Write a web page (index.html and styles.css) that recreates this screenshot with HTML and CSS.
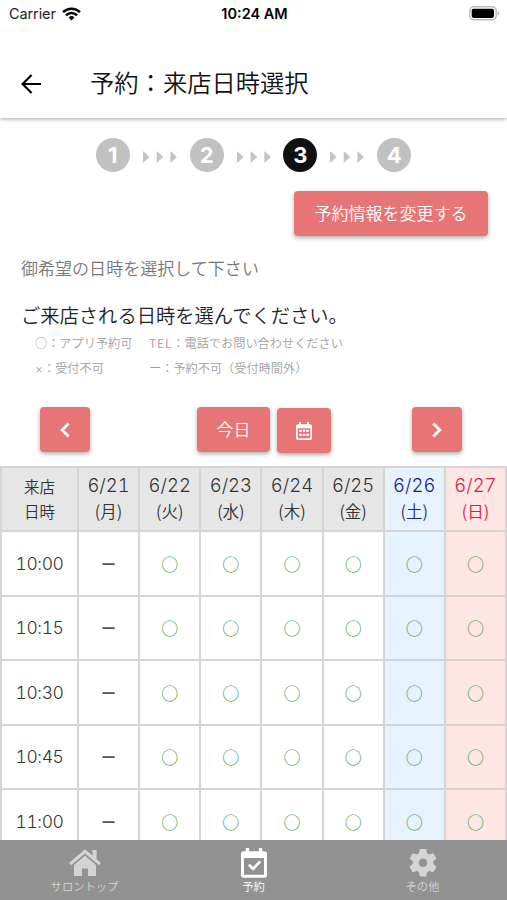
FILE: index.html
```html
<!DOCTYPE html>
<html lang="ja">
<head>
    <meta charset="UTF-8">
    <meta name="viewport" content="width=device-width, initial-scale=1.0">
    <title>予約：来店日時選択</title>
    <link rel="stylesheet" href="styles.css">
</head>
<body>

<div class="status-bar">
    <div class="carrier">
        <span>Carrier</span>
        <svg width="19" height="14" viewBox="0 0 19 14" fill="none" stroke="#000" stroke-width="2.5">
            <path d="M1 5.1a12.2 12.2 0 0 1 17 0"/>
            <path d="M4 8.3a7.9 7.9 0 0 1 11 0"/>
            <path d="M9.5 13.5L6.6 10.5a4.2 4.2 0 0 1 5.8 0z" fill="#000" stroke="none"/>
        </svg>
    </div>
    <div class="clock">10:24 AM</div>
    <div class="battery">
        <svg width="31" height="15" viewBox="0 0 31 15">
            <rect x="0.8" y="0.8" width="26.4" height="13" rx="4" fill="#fff" stroke="#bdbdbd" stroke-width="1.5"/>
            <rect x="2.7" y="2.7" width="22.3" height="9.2" rx="1.8" fill="#000"/>
            <path d="M28.6 5v4.6c1-.4 1.7-1.3 1.7-2.3S29.6 5.4 28.6 5z" fill="#b5b5b5"/>
        </svg>
    </div>
</div>

<header>
    <svg class="back" width="20" height="20" viewBox="0 0 20 20" fill="none" stroke="#000" stroke-width="2.2">
        <path d="M20 10H2M10.6 1L1.6 10l9 9"/>
    </svg>
    <h1>予約：来店日時選択</h1>
</header>

<main>
    <div class="steps">
        <span class="step">1</span>
        <svg class="arrows" width="34" height="12" viewBox="0 0 34 12"><path d="M0 0l6.5 6L0 12zM13.7 0l6.5 6-6.5 6zM27.4 0l6.5 6-6.5 6z"/></svg>
        <span class="step">2</span>
        <svg class="arrows" width="34" height="12" viewBox="0 0 34 12"><path d="M0 0l6.5 6L0 12zM13.7 0l6.5 6-6.5 6zM27.4 0l6.5 6-6.5 6z"/></svg>
        <span class="step active">3</span>
        <svg class="arrows" width="34" height="12" viewBox="0 0 34 12"><path d="M0 0l6.5 6L0 12zM13.7 0l6.5 6-6.5 6zM27.4 0l6.5 6-6.5 6z"/></svg>
        <span class="step">4</span>
    </div>

    <div class="change">
        <button type="button" class="btn btn-change">予約情報を変更する</button>
    </div>

    <p class="lead">御希望の日時を選択して下さい</p>
    <h2>ご来店される日時を選んでください。</h2>

    <div class="legend">
        <span>○：アプリ予約可</span>
        <span><span class="tel">TEL</span>：電話でお問い合わせください</span>
        <span><span class="cross">×</span>：受付不可</span>
        <span>ー：予約不可（受付時間外）</span>
    </div>

    <div class="week-nav">
        <button type="button" class="btn btn-arrow">
            <svg width="10" height="16" viewBox="0 0 10 16" fill="none" stroke="#fff" stroke-width="2.8"><path d="M8.7 1.5L2.2 8l6.5 6.5"/></svg>
        </button>
        <div class="week-today">
            <button type="button" class="btn btn-today">今日</button>
            <button type="button" class="btn btn-calendar">
                <svg width="16" height="18" viewBox="0 0 16 18">
                    <path fill="#fff" fill-rule="evenodd" d="M3 0h2v2.3h6V0h2v2.3h1a2 2 0 0 1 2 2V16a2 2 0 0 1-2 2H2a2 2 0 0 1-2-2V4.3a2 2 0 0 1 2-2h1zM1.7 6.3v9.9h12.6V6.3z"/>
                    <path fill="#fff" d="M3.3 7.7h2.4V10H3.3zM6.8 7.7h2.4V10H6.8zM10.3 7.7h2.4V10h-2.4zM3.3 11.8h2.4v2.3H3.3zM6.8 11.8h2.4v2.3H6.8zM10.3 11.8h2.4v2.3h-2.4z"/>
                </svg>
            </button>
        </div>
        <button type="button" class="btn btn-arrow">
            <svg width="10" height="16" viewBox="0 0 10 16" fill="none" stroke="#fff" stroke-width="2.8"><path d="M1.3 1.5L7.8 8l-6.5 6.5"/></svg>
        </button>
    </div>

    <table class="schedule">
        <thead>
            <tr>
                <th class="time">来店<br>日時</th>
                <th><b>6/21</b>(月)</th>
                <th><b>6/22</b>(火)</th>
                <th><b>6/23</b>(水)</th>
                <th><b>6/24</b>(木)</th>
                <th><b>6/25</b>(金)</th>
                <th class="sat"><b>6/26</b>(土)</th>
                <th class="sun"><b>6/27</b>(日)</th>
            </tr>
        </thead>
        <tbody>
            <tr><td class="time">10:00</td><td class="closed">ー</td><td>○</td><td>○</td><td>○</td><td>○</td><td class="sat">○</td><td class="sun">○</td></tr>
            <tr><td class="time">10:15</td><td class="closed">ー</td><td>○</td><td>○</td><td>○</td><td>○</td><td class="sat">○</td><td class="sun">○</td></tr>
            <tr><td class="time">10:30</td><td class="closed">ー</td><td>○</td><td>○</td><td>○</td><td>○</td><td class="sat">○</td><td class="sun">○</td></tr>
            <tr><td class="time">10:45</td><td class="closed">ー</td><td>○</td><td>○</td><td>○</td><td>○</td><td class="sat">○</td><td class="sun">○</td></tr>
            <tr><td class="time">11:00</td><td class="closed">ー</td><td>○</td><td>○</td><td>○</td><td>○</td><td class="sat">○</td><td class="sun">○</td></tr>
        </tbody>
    </table>
</main>

<nav class="tab-bar">
    <a class="tab">
        <svg width="34" height="30" viewBox="0 0 34 30" fill="currentColor">
            <path d="M17 1.3L1 14.9l2 2.3L17 5.5l14 11.7 2-2.3-4.4-3.7V2h-4.1v5.6z"/>
            <path d="M17 7.7L6 17v11h8v-7.6h6V28h8V17z"/>
        </svg>
        <span>サロントップ</span>
    </a>
    <a class="tab current">
        <svg width="28" height="30" viewBox="0 0 28 30" fill="currentColor">
            <path fill-rule="evenodd" d="M5.8 0h3.3v3.3h9.8V0h3.3v3.3h2A2.8 2.8 0 0 1 27 6.1V27a2.8 2.8 0 0 1-2.8 2.8H3.8A2.8 2.8 0 0 1 1 27V6.1a2.8 2.8 0 0 1 2.8-2.8h2zM4 10v16.8h20V10z"/>
            <path d="M7.9 17.7l2-2 3.1 3.2 6.2-6.3 2 2-8.2 8.2z"/>
        </svg>
        <span>予約</span>
    </a>
    <a class="tab">
        <svg width="30" height="30" viewBox="1.5 1.7 21 21" fill="currentColor">
            <path d="M19.14 12.94c.04-.3.06-.61.06-.94 0-.32-.02-.64-.07-.94l2.03-1.58c.18-.14.23-.41.12-.61l-1.92-3.32c-.12-.22-.37-.29-.59-.22l-2.39.96c-.5-.38-1.03-.7-1.62-.94l-.36-2.54c-.04-.24-.24-.41-.48-.41h-3.84c-.24 0-.43.17-.47.41l-.36 2.54c-.59.24-1.13.57-1.62.94l-2.39-.96c-.22-.08-.47 0-.59.22L2.74 8.87c-.12.21-.08.47.12.61l2.03 1.58c-.05.3-.09.63-.09.94s.02.64.07.94l-2.03 1.58c-.18.14-.23.41-.12.61l1.92 3.32c.12.22.37.29.59.22l2.39-.96c.5.38 1.03.7 1.62.94l.36 2.54c.05.24.24.41.48.41h3.84c.24 0 .44-.17.47-.41l.36-2.54c.59-.24 1.13-.56 1.62-.94l2.39.96c.22.08.47 0 .59-.22l1.92-3.32c.12-.22.07-.47-.12-.61l-2.01-1.58zM12 15a3 3 0 1 1 0-6 3 3 0 0 1 0 6z"/>
        </svg>
        <span>その他</span>
    </a>
</nav>

</body>
</html>
```

FILE: styles.css
```css
* {
    box-sizing: border-box;
}
html, body {
    height: 100%;
    margin: 0;
}
body {
    display: flex;
    flex-direction: column;
    overflow: hidden;
    background-color: #fff;
    color: #333;
    font-family: "Noto Sans CJK JP", sans-serif;
    font-weight: 350;
}

/* Status bar */
.status-bar {
    position: relative;
    z-index: 1;
    display: grid;
    grid-template-columns: 1fr auto 1fr;
    align-items: center;
    flex-shrink: 0;
    height: 27px;
    padding: 0 7px 0 9px;
    background-color: #fff;
    font-family: Inter, sans-serif;
    font-size: 14.5px;
    font-weight: 400;
    color: #222;
}
.carrier {
    display: flex;
    align-items: center;
    gap: 6px;
}
.carrier span {
    letter-spacing: -0.1px;
}
.clock {
    font-weight: 600;
    color: #000;
}
.battery {
    display: flex;
    justify-content: flex-end;
}

/* Header */
header {
    display: flex;
    align-items: center;
    flex-shrink: 0;
    height: 91px;
    padding: 22px 20px 0 21px;
    gap: 49px;
    box-shadow: 0 1px 4px rgba(0, 0, 0, 0.35);
}
header h1 {
    margin: 0 0 3px;
    font-size: 24.3px;
    font-weight: 350;
    line-height: 36px;
    color: #111;
}
main {
    flex: 1;
    min-height: 0;
    overflow: hidden;
}

/* Steps */
.steps {
    display: flex;
    align-items: center;
    justify-content: center;
    gap: 12.9px;
    margin-top: 20px;
    height: 34px;
}
.step {
    width: 34px;
    height: 34px;
    border-radius: 50%;
    background-color: #c1c1c1;
    color: #fff;
    font-family: Inter, sans-serif;
    font-size: 22px;
    font-weight: 700;
    line-height: 34px;
    text-align: center;
}
.step.active {
    background-color: #111;
}
.arrows {
    margin-top: 4px;
    fill: #c4c4c4;
}

/* Buttons */
.btn {
    display: flex;
    align-items: center;
    justify-content: center;
    height: 45px;
    padding: 0;
    border: none;
    border-radius: 4px;
    background-color: #e77575;
    color: #fff;
    font-family: inherit;
    font-size: 17px;
    font-weight: 350;
    box-shadow: 0 2px 4px rgba(0, 0, 0, 0.32);
}
.change {
    display: flex;
    justify-content: flex-end;
    padding: 19px 19px 0 0;
}
.btn-change {
    width: 194px;
    padding-bottom: 3px;
}

.lead {
    margin: 20px 0 0 21px;
    font-size: 17.05px;
    line-height: 24px;
    color: #777;
}
h2 {
    margin: 20px 0 0 21px;
    font-size: 19.3px;
    font-weight: 350;
    line-height: 30px;
    color: #222;
}
.legend {
    display: grid;
    grid-template-columns: 114px 1fr;
    margin-top: 1px;
    padding-left: 35px;
    font-size: 12.2px;
    line-height: 24.5px;
    color: #a0a0a0;
}
.legend .tel {
    letter-spacing: 0.8px;
}
.legend .cross {
    font-family: Inter, sans-serif;
}

/* Week navigation */
.week-nav {
    display: grid;
    grid-template-columns: 157px 214.5px 50px;
    margin: 26px 0 0 40px;
}
.week-today {
    display: flex;
    gap: 7px;
}
.btn-arrow {
    width: 50px;
}
.btn-today {
    width: 73px;
    padding-bottom: 3px;
}
.btn-calendar {
    width: 54px;
    margin-top: 1px;
}

/* Schedule */
.schedule {
    width: 507px;
    margin-top: 13px;
    border-collapse: collapse;
    table-layout: fixed;
}
.schedule th, .schedule td {
    height: 64.4px;
    padding: 0;
    border: 2px solid #d4d4d4;
    text-align: center;
    vertical-align: middle;
}
.schedule th {
    padding-bottom: 1px;
    background-color: #e6e6e6;
    font-size: 16.5px;
    font-weight: 350;
    line-height: 26px;
}
.schedule th b {
    display: block;
    font-family: Inter, sans-serif;
    font-size: 18.5px;
    font-weight: 350;
    font-variant-numeric: tabular-nums;
    line-height: 25px;
}
.schedule th.time {
    width: 77px;
    font-size: 15.5px;
    line-height: 25px;
}
.schedule td {
    font-size: 17px;
    font-weight: 400;
    color: #43a047;
}
.schedule td.time {
    font-family: Inter, sans-serif;
    font-size: 17.5px;
    font-weight: 350;
    font-variant-numeric: tabular-nums;
    letter-spacing: -0.4px;
    color: #333;
}
.schedule td.closed {
    font-size: 15px;
    font-weight: 500;
    color: #555;
}
.schedule .sat {
    background-color: #e6f2fe;
}
.schedule .sun {
    background-color: #fee6e5;
}
.schedule th.sat {
    color: #1a1a8c;
}
.schedule th.sun {
    color: #d81b4a;
}

/* Tab bar */
.tab-bar {
    display: grid;
    grid-template-columns: repeat(3, 1fr);
    flex-shrink: 0;
    height: 60px;
    background-color: #929292;
}
.tab {
    display: flex;
    flex-direction: column;
    align-items: center;
    color: #d4d4d4;
    font-size: 11.3px;
    line-height: 16px;
}
.tab svg {
    height: 30px;
    margin-top: 8px;
}
.tab.current {
    color: #fff;
}
```
